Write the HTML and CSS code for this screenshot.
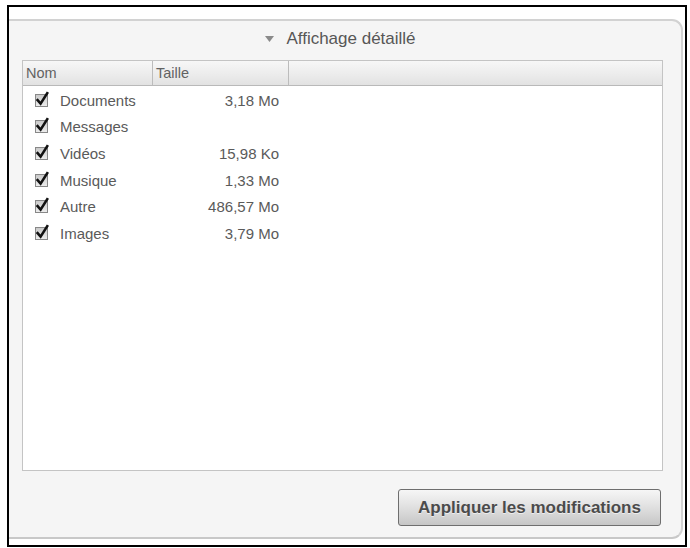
FILE: index.html
```html
<!DOCTYPE html>
<html lang="fr">
<head>
<meta charset="utf-8">
<link rel="stylesheet" href="styles.css">
</head>
<body>
<div class="frame">
  <div class="panel">
    <div class="title"><svg class="tri" viewBox="0 0 9 6"><path d="M0 0 H9 L4.5 6 Z" fill="#8a8a8a"/></svg>Affichage détaillé</div>
    <div class="table">
      <div class="thead">
        <div class="th">Nom</div>
        <div class="th">Taille</div>
        <div class="th last"></div>
      </div>
      <div class="tbody">
        <div class="row"><div class="name"><svg class="cb" viewBox="0 0 16 16"><defs><linearGradient id="g" x1="0" y1="0" x2="0" y2="1"><stop offset="0" stop-color="#c8c8c8"/><stop offset="1" stop-color="#eeeeee"/></linearGradient></defs><rect x="1.5" y="3.5" width="12" height="12" fill="url(#g)" stroke="#888"/><path d="M3.6 9.2 L6.6 12.6 L13.2 2.2" fill="none" stroke="#111" stroke-width="2.6" stroke-linecap="square"/></svg><span>Documents</span></div><div class="size">3,18 Mo</div></div>
        <div class="row"><div class="name"><svg class="cb" viewBox="0 0 16 16"><rect x="1.5" y="3.5" width="12" height="12" fill="url(#g)" stroke="#888"/><path d="M3.6 9.2 L6.6 12.6 L13.2 2.2" fill="none" stroke="#111" stroke-width="2.6" stroke-linecap="square"/></svg><span>Messages</span></div><div class="size"></div></div>
        <div class="row"><div class="name"><svg class="cb" viewBox="0 0 16 16"><rect x="1.5" y="3.5" width="12" height="12" fill="url(#g)" stroke="#888"/><path d="M3.6 9.2 L6.6 12.6 L13.2 2.2" fill="none" stroke="#111" stroke-width="2.6" stroke-linecap="square"/></svg><span>Vidéos</span></div><div class="size">15,98 Ko</div></div>
        <div class="row"><div class="name"><svg class="cb" viewBox="0 0 16 16"><rect x="1.5" y="3.5" width="12" height="12" fill="url(#g)" stroke="#888"/><path d="M3.6 9.2 L6.6 12.6 L13.2 2.2" fill="none" stroke="#111" stroke-width="2.6" stroke-linecap="square"/></svg><span>Musique</span></div><div class="size">1,33 Mo</div></div>
        <div class="row"><div class="name"><svg class="cb" viewBox="0 0 16 16"><rect x="1.5" y="3.5" width="12" height="12" fill="url(#g)" stroke="#888"/><path d="M3.6 9.2 L6.6 12.6 L13.2 2.2" fill="none" stroke="#111" stroke-width="2.6" stroke-linecap="square"/></svg><span>Autre</span></div><div class="size">486,57 Mo</div></div>
        <div class="row"><div class="name"><svg class="cb" viewBox="0 0 16 16"><rect x="1.5" y="3.5" width="12" height="12" fill="url(#g)" stroke="#888"/><path d="M3.6 9.2 L6.6 12.6 L13.2 2.2" fill="none" stroke="#111" stroke-width="2.6" stroke-linecap="square"/></svg><span>Images</span></div><div class="size">3,79 Mo</div></div>
      </div>
    </div>
    <div class="actions">
      <button class="apply">Appliquer les modifications</button>
    </div>
  </div>
</div>
</body>
</html>
```
FILE: styles.css
```css
* { box-sizing: border-box; }
html, body { margin: 0; padding: 0; background: #fff; }
body {
  font-family: "Liberation Sans", Arial, sans-serif;
  color: #555;
  padding: 5px 0 0 7px;
}
.frame {
  width: 680px;
  height: 542px;
  border: 2px solid #000;
  overflow: hidden;
  padding-top: 12px;
}
.panel {
  margin-left: -10px;
  width: 684px;
  height: 520px;
  background: #f5f5f5;
  border: 2px solid #d2d2d2;
  border-bottom-color: #c8c8c8;
  border-radius: 0 11px 11px 0;
  display: flex;
  flex-direction: column;
  padding: 0 18px 0 21px;
}
.title {
  height: 39px;
  display: flex;
  align-items: center;
  justify-content: center;
  font-size: 17px;
  color: #575757;
  padding-right: 4px;
  padding-bottom: 3px;
}
.tri {
  width: 9px;
  height: 6px;
  margin-right: 12px;
}
.table {
  height: 411px;
  background: #fff;
  border: 1px solid #c4c4c4;
  display: flex;
  flex-direction: column;
}
.thead {
  display: grid;
  grid-template-columns: 130px 136px 1fr;
  height: 25px;
  background: linear-gradient(#f7f7f7, #ececec 55%, #e2e2e2);
  border-bottom: 1px solid #b9b9b9;
}
.th {
  font-size: 14.5px;
  color: #626262;
  padding: 4px 0 0 3px;
  border-right: 1px solid #bcbcbc;
}
.th.last { border-right: none; }
.tbody { padding-top: 1px; }
.row {
  display: grid;
  grid-template-columns: 130px 136px 1fr;
  height: 26.6px;
  align-items: center;
  font-size: 15px;
  color: #5a5a5a;
}
.name {
  display: flex;
  align-items: center;
  padding-left: 11px;
}
.cb {
  width: 16px;
  height: 16px;
  margin-right: 10px;
  margin-top: -3px;
}
.size {
  text-align: right;
  padding-right: 10px;
}
.actions {
  display: flex;
  justify-content: flex-end;
  padding-top: 18px;
  padding-right: 2px;
}
.apply {
  width: 263px;
  height: 37px;
  font-family: "Liberation Sans", Arial, sans-serif;
  font-weight: bold;
  font-size: 17px;
  color: #4b4b4b;
  background: linear-gradient(#f6f6f6, #e2e2e2 45%, #c6c6c6);
  border: 1px solid #6e6e6e;
  border-radius: 3px;
  text-shadow: 0 1px 0 rgba(255,255,255,0.6);
  padding: 0;
}
```
